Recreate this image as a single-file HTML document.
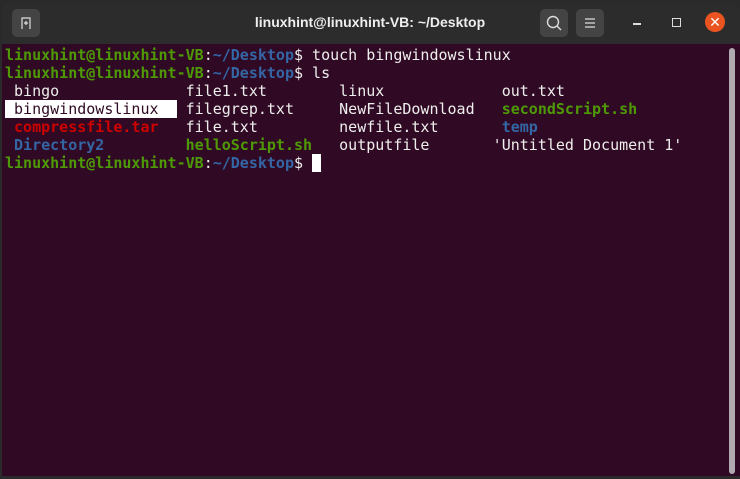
<!DOCTYPE html>
<html><head><style>
body{margin:0;width:740px;height:479px;background:#2a2a2a;overflow:hidden;position:relative;font-family:"Liberation Sans",sans-serif}
.tb{position:absolute;left:2px;top:3px;width:738px;height:41px;background:#2c2c2c;border-radius:8px 8px 0 0}
.title{position:absolute;left:0;width:740px;top:14px;text-align:center;color:#eee;font-weight:bold;font-size:14px}
.btn{position:absolute;top:9px;width:28px;height:28px;background:#444;border-radius:5px}
.term{position:absolute;left:2px;top:44px;width:738px;height:432px;background:#300a24}
pre{position:absolute;left:5px;top:46px;margin:0;font-family:"DejaVu Sans Mono",monospace;font-size:15px;line-height:18px;color:#eeeeec}
.g{color:#4e9a06;font-weight:bold}.b{color:#3465a4;font-weight:bold}.r{color:#cc0000;font-weight:bold}
.sel{background:#fff;color:#300a24}
.cur{background:#fff;color:#fff}
.sb{position:absolute;left:729px;top:48px;width:6px;height:426px;background:#b0aab0;border-radius:3px}
</style></head><body>
<div class="tb"></div>
<div class="btn" style="left:12px"><svg width="28" height="28"><path d="M10 20V9h8v11M12 14h4M14 12v4" stroke="#ddd" stroke-width="1.2" fill="none"/></svg></div>
<div class="title">linuxhint@linuxhint-VB: ~/Desktop</div>
<div class="btn" style="left:540px"><svg width="28" height="28"><circle cx="13" cy="13" r="5.5" stroke="#ddd" stroke-width="1.4" fill="none"/><path d="M17 17l4 4" stroke="#ddd" stroke-width="1.4"/></svg></div>
<div class="btn" style="left:576px"><svg width="28" height="28"><path d="M9 10h10M9 14h10M9 18h10" stroke="#ddd" stroke-width="1.2"/></svg></div>
<div style="position:absolute;left:633px;top:23px;width:8px;height:1.5px;background:#ddd"></div>
<div style="position:absolute;left:672px;top:18px;width:7px;height:7px;border:1.3px solid #ddd"></div>
<div style="position:absolute;left:705px;top:12px;width:20px;height:20px;border-radius:50%;background:#e95420;color:#fff;font-size:14px;text-align:center;line-height:20px">✕</div>
<div class="term"></div>
<pre><span class="g">linuxhint@linuxhint-VB</span>:<span class="b">~/Desktop</span>$ touch bingwindowslinux
<span class="g">linuxhint@linuxhint-VB</span>:<span class="b">~/Desktop</span>$ ls
 bingo              file1.txt        linux             out.txt
<span class="sel"> bingwindowslinux  </span> filegrep.txt     NewFileDownload   <span class="g">secondScript.sh</span>
 <span class="r">compressfile.tar</span>   file.txt         newfile.txt       <span class="b">temp</span>
 <span class="b">Directory2</span>         <span class="g">helloScript.sh</span>   outputfile       'Untitled Document 1'
<span class="g">linuxhint@linuxhint-VB</span>:<span class="b">~/Desktop</span>$ <span class="cur">_</span></pre>
<div class="sb"></div>
</body></html>
